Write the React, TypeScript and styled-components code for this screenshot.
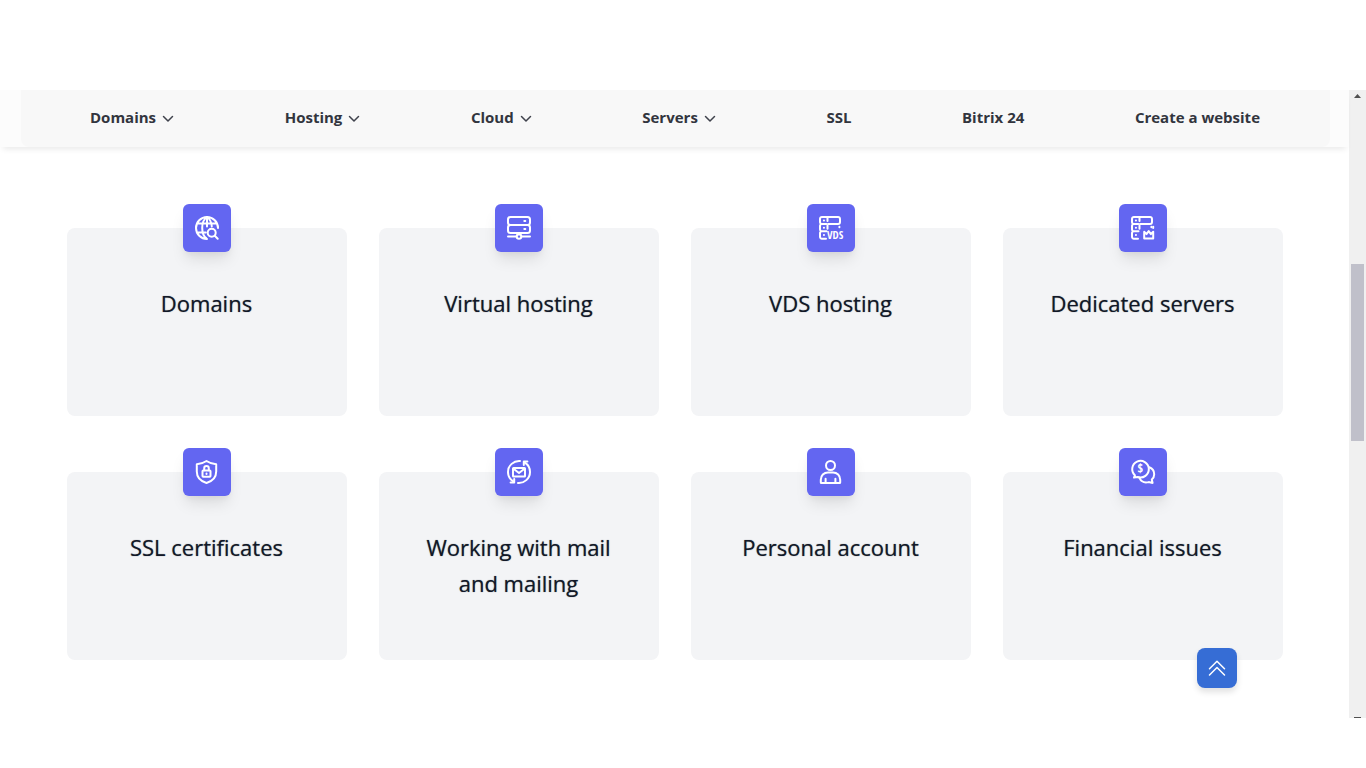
import React from "react";
import styled, { createGlobalStyle } from "styled-components";

const GlobalStyle = createGlobalStyle`
  *, *::before, *::after { box-sizing: border-box; }
  body {
    margin: 0;
    background: #fff;
    color: #111827;
    font-family: "Open Sans", "Noto Sans", sans-serif;
  }
`;

const Page = styled.div`
  display: flex;
  padding: 90px 0 50px;
`;

const Content = styled.div`
  position: relative;
  flex: 1;
  min-width: 0;
`;

const Header = styled.header`
  padding: 0 19px 0 21px;
  background: #fcfcfc;
  box-shadow: 0 5px 6px -3px rgba(0, 0, 0, 0.09);
`;

const Nav = styled.nav`
  display: flex;
  align-items: center;
  justify-content: space-between;
  height: 57px;
  padding: 0 70px 4px 69px;
  border-radius: 0 0 8px 8px;
  background: #f8f8f8;
`;

const navItem = `
  display: flex;
  align-items: center;
  gap: 6px;
  padding: 0;
  border: 0;
  background: none;
  color: #32353e;
  font: 700 15px/24px "Open Sans", "Noto Sans", sans-serif;
  text-decoration: none;
  white-space: nowrap;
  cursor: pointer;
`;
const NavLink = styled.a`${navItem}`;
const NavButton = styled.button`${navItem}`;

const Chevron = styled.svg`
  width: 12px;
  height: 12px;
  margin-top: 4px;
`;

const Grid = styled.main`
  display: grid;
  grid-template-columns: repeat(4, minmax(0, 1fr));
  gap: 56px 32px;
  max-width: 1280px;
  margin: 0 auto;
  padding: 81px 32px 58px;
`;

const Card = styled.a`
  display: flex;
  flex-direction: column;
  align-items: center;
  min-height: 188px;
  padding: 0 40px 32px;
  border-radius: 8px;
  background: #f3f4f6;
  color: inherit;
  text-decoration: none;
`;

const Tile = styled.span`
  display: flex;
  align-items: center;
  justify-content: center;
  width: 48px;
  height: 48px;
  margin-top: -24px;
  border-radius: 6px;
  background: #6366f1;
  box-shadow: 0 10px 15px -3px rgba(0, 0, 0, 0.1), 0 4px 6px -2px rgba(0, 0, 0, 0.05);
`;

const Glyph = styled.svg`
  width: 24px;
  height: 24px;
  overflow: visible;
  fill: none;
  stroke: #fff;
  stroke-width: 2;
  stroke-linecap: round;
  stroke-linejoin: round;
`;

const GlyphText = styled.text<{ $size: number }>`
  fill: #fff;
  stroke: none;
  font: 700 ${(p) => p.$size}px "Liberation Sans Narrow", "Open Sans Condensed", "Roboto Condensed", "Liberation Sans", sans-serif;
`;

const Title = styled.h3`
  margin: 33px 0 0;
  font-size: 22px;
  font-weight: 500;
  line-height: 36px;
  text-align: center;
  text-shadow: 0 0 1px rgba(17, 24, 39, 0.6);
`;

const TopButton = styled.button`
  position: absolute;
  right: 112px;
  bottom: 30px;
  display: flex;
  align-items: center;
  justify-content: center;
  width: 40px;
  height: 40px;
  padding: 0;
  border: 0;
  border-radius: 8px;
  background: #366dd5;
  box-shadow: 0 4px 6px rgba(0, 0, 0, 0.12);
  cursor: pointer;
`;

const ScrollTrack = styled.div`
  display: flex;
  flex-direction: column;
  align-items: center;
  width: 17px;
  background: #f0f0f0;
`;
const ScrollArrow = styled.svg`
  width: 7px;
  height: 4px;
  margin-top: 4px;
`;
const ScrollSpace = styled.div<{ $grow: number }>`
  flex: ${(p) => p.$grow} 1 0;
`;
const ScrollThumb = styled.div`
  flex: 177 1 0;
  width: 13px;
  background: #c0c0ca;
`;
const ScrollEnd = styled.div`
  width: 7px;
  height: 1px;
  background: #505050;
`;

const Globe = () => (
  <Glyph viewBox="0 0 24 24">
    <path
      d="M12 23A11 11 0 1 1 23 12M2.4 7.5h19.2M2.4 16.5h8.4M12 1C8.900 3 7.200 7.200 7.200 12S8.900 21 12 23M12 1c2.800 1.900 4.500 5.600 4.800 9.400M12 1v9.500"
    />
    <circle cx="16.700" cy="16.700" r="4" />
    <path d="m19.800 19.800 2.900 2.900" />
  </Glyph>
);

const Hosting = () => (
  <Glyph viewBox="0 0 24 24" strokeWidth="2">
    <rect x="1" y="1" width="22" height="8" rx="2.500" />
    <rect x="1" y="9" width="22" height="8" rx="2.500" />
    <path d="M12 17v1.500M1 20.500h8.500M14.500 20.500H23" />
    <circle cx="12" cy="20.500" r="2.300" />
    <path d="M17.300 5h1M17.300 13h1" />
  </Glyph>
);

const ServerStack = () => (
  <>
    <path d="M7.500 8H3A1.900 1.900 0 0 1 1 6.100V2.900A1.900 1.900 0 0 1 2.900 1h16.200A1.900 1.900 0 0 1 21 2.900v3.200A1.900 1.900 0 0 1 19.100 8H9.200M7.500 15.200H3a1.900 1.900 0 0 1-2-1.900V9.900A1.900 1.900 0 0 1 3 8M7 22.800H3A1.900 1.900 0 0 1 1 21v-3.900a1.900 1.900 0 0 1 2-1.900M8.500 1v4" />
    <path d="M4.900 4.500h.1M4.900 11.700h.1M4.900 19h.1" />
    <path d="M8.500 9.500v3.300M20.400 10.700v.5" />
  </>
);

const Vds = () => (
  <Glyph viewBox="0 0 24 24">
    <ServerStack />
    <GlyphText $size={11} x="8" y="23">VDS</GlyphText>
  </Glyph>
);

const Dedicated = () => (
  <Glyph viewBox="0 0 24 24">
    <ServerStack />
    <path d="M22.200 10.800v1.200" />
    <path d="m13.200 15.800 2.300 2.300 2.200-3 2.200 3 2.300-2.300v6.600h-9z" />
  </Glyph>
);

const Shield = () => (
  <Glyph viewBox="0 0 24 24">
    <path d="M11.500 1c3 2 6.200 3.100 9.700 3.200v7.400c0 6-4.100 9.800-9.700 11.400C5.900 21.400 1.800 17.600 1.800 11.600V4.200C5.300 4.100 8.500 3 11.500 1Z" />
    <rect x="7.500" y="10.600" width="8" height="6.200" rx=".7" />
    <path d="M9.200 10.300V8.400a2.300 2.300 0 0 1 4.600 0v1.900M11.500 13.500v.4" />
  </Glyph>
);

const Mail = () => (
  <Glyph viewBox="0 0 24 24">
    <path d="M13 1C6.700.5 1 5.500 1 12c0 4 2 7.500 5.500 9.600M11 23c6.300.5 12-4.500 12-11 0-4-2-7.500-5.500-9.600" />
    <path d="M16.800 5V1.600h3.600M7.200 19v3.400H3.600" />
    <rect x="6" y="8" width="12" height="8.500" rx=".5" />
    <path d="m6.500 8.700 5.500 4.300 5.500-4.300" />
  </Glyph>
);

const Person = () => (
  <Glyph viewBox="0 0 24 24">
    <circle cx="11.500" cy="5.500" r="4.500" />
    <path
      d="M1.800 22.500v-2.700c0-4.200 3.100-7.300 7.200-7.300h5c4.100 0 7.200 3.100 7.200 7.300v2.700a.6.600 0 0 1-.6.600H2.400a.6.600 0 0 1-.6-.6ZM6.600 18.700v4.200M16.400 18.700v4.200"
    />
  </Glyph>
);

const Finance = () => (
  <Glyph viewBox="0 0 24 24">
    <path d="M3.900 15.300A8.300 8.300 0 1 1 6.700 17L3 17.600Z" />
    <path d="M18.200 7.300c3 1.100 5 3.700 5 6.900 0 2.200-.9 4-2.400 5.300l.8 3.400-3.900-.8c-4.100 1-7.700-.7-9.300-4.200" />
    <GlyphText $size={12} x="9.200" y="13" textAnchor="middle">$</GlyphText>
  </Glyph>
);

const navigation = [
  { label: "Domains", menu: true },
  { label: "Hosting", menu: true },
  { label: "Cloud", menu: true },
  { label: "Servers", menu: true },
  { label: "SSL" },
  { label: "Bitrix 24" },
  { label: "Create a website" },
];

const topics = [
  { title: "Domains", Icon: Globe },
  { title: "Virtual hosting", Icon: Hosting },
  { title: "VDS hosting", Icon: Vds },
  { title: "Dedicated servers", Icon: Dedicated },
  { title: "SSL certificates", Icon: Shield },
  { title: "Working with mail and mailing", Icon: Mail },
  { title: "Personal account", Icon: Person },
  { title: "Financial issues", Icon: Finance },
];

export default function App() {
  return (
    <>
      <GlobalStyle />
      <Page>
        <Content>
          <Header>
            <Nav>
              {navigation.map(({ label, menu }) =>
                menu ? (
                  <NavButton key={label} type="button">
                    {label}
                    <Chevron viewBox="0 0 12 12" fill="none" stroke="#3f424c" strokeWidth="1.500" strokeLinecap="round" strokeLinejoin="round">
                      <path d="M1.500 3.500 6 8l4.500-4.500" />
                    </Chevron>
                  </NavButton>
                ) : (
                  <NavLink key={label} href="#">{label}</NavLink>
                )
              )}
            </Nav>
          </Header>
          <Grid>
            {topics.map(({ title, Icon }) => (
              <Card key={title} href="#">
                <Tile><Icon /></Tile>
                <Title>{title}</Title>
              </Card>
            ))}
          </Grid>
          <TopButton type="button" aria-label="Back to top">
            <svg width="18" height="18" viewBox="0 0 18 18" fill="none" stroke="#fff" strokeWidth="1.500" strokeLinecap="round" strokeLinejoin="round">
              <path d="m1.500 9.800 7.500-7.500 7.500 7.500M1.500 16 9 8.500l7.500 7.500" />
            </svg>
          </TopButton>
        </Content>
        <ScrollTrack>
          <ScrollArrow viewBox="0 0 7 4"><path d="M0 4 3.500 0 7 4Z" fill="#505050" /></ScrollArrow>
          <ScrollSpace $grow={166} />
          <ScrollThumb />
          <ScrollSpace $grow={276} />
          <ScrollEnd />
        </ScrollTrack>
      </Page>
    </>
  );
}
